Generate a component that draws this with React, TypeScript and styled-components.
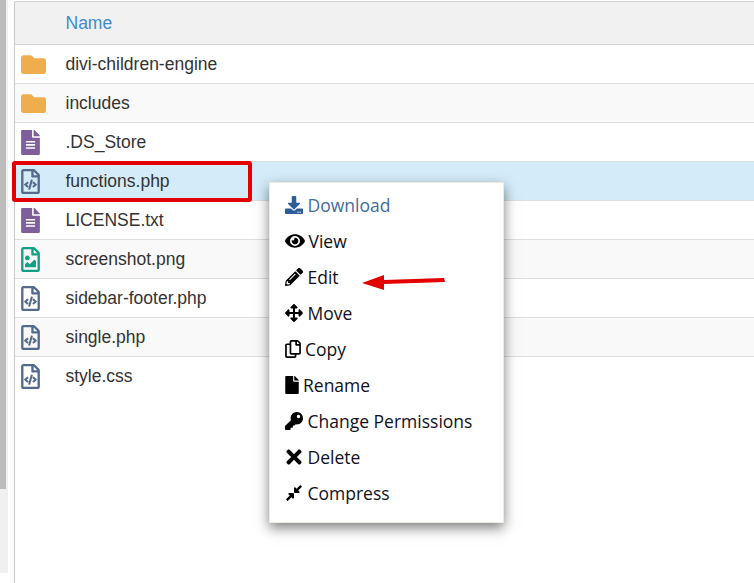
import React from "react";
import styled, { createGlobalStyle } from "styled-components";
import {
  FaFolder, FaFileAlt, FaRegFileCode, FaRegFileImage, FaDownload, FaEye, FaPencilAlt,
  FaArrowsAlt, FaRegCopy, FaFile, FaKey, FaTimes, FaCompressAlt,
} from "react-icons/fa";

const Global = createGlobalStyle`
  html, body { margin: 0; padding: 0; background: #fff; width: 754px; height: 583px; overflow: hidden; }
  #root { width: 754px; height: 583px; }
`;

const Page = styled.div`
  position: relative;
  display: flex;
  width: 754px;
  height: 583px;
  overflow: hidden;
  font-family: "Liberation Sans", Arial, sans-serif;
`;

const Track = styled.div`
  width: 8px;
  height: 573px;
  background: #f0f0f0;
  flex: none;
`;

const Thumb = styled.div`
  width: 6px;
  height: 489px;
  background: #bbbbbb;
`;

const Table = styled.div`
  margin: 1px 0 0 6px;
  flex: 1;
  height: 582px;
  border-left: 1px solid #c9c9c9;
  border-top: 1px solid #d4d4d4;
`;

const Header = styled.div`
  height: 42px;
  background: #f1f1f1;
  border-bottom: 1px solid #d4d4d4;
  display: flex;
  align-items: center;
  padding-left: 50.5px;
  font-size: 17.5px;
  color: #428bca;
`;

const Row = styled.div<{ $bg: string; $last: boolean }>`
  height: 38px;
  display: flex;
  align-items: center;
  background: ${(p) => p.$bg};
  border-bottom: ${(p) => (p.$last ? "none" : "1px solid #dddddd")};
  font-size: 17.5px;
  color: #333333;
`;

const IconCell = styled.div<{ $color: string; $w: number }>`
  width: 50.5px;
  flex: none;
  display: flex;
  justify-content: flex-start;
  padding-left: 6px;
  box-sizing: border-box;
  color: ${(p) => p.$color};
  font-size: 25px;
  svg { display: block; width: ${(p) => p.$w}px; height: 25px; }
`;

const Highlight = styled.div`
  position: absolute;
  left: 12px;
  top: 161px;
  width: 240px;
  height: 41px;
  box-sizing: border-box;
  border: 4px solid #e30000;
  border-radius: 3px;
  pointer-events: none;
`;

const Menu = styled.div`
  position: absolute;
  left: 269px;
  top: 182px;
  width: 235px;
  height: 341px;
  box-sizing: border-box;
  background: #fff;
  border: 1px solid #ececdf;
  box-shadow: 0 5px 12px rgba(0, 0, 0, 0.5);
  padding: 4px 15px 0;
  font-family: "Open Sans", sans-serif;
  font-size: 17.5px;
`;

const Item = styled.div<{ $accent?: boolean; $gap: number }>`
  height: 36px;
  display: flex;
  align-items: center;
  gap: ${(p) => p.$gap}px;
  color: ${(p) => (p.$accent ? "#3f6b9e" : "#101020")};
`;

const IconSlot = styled.span<{ $accent?: boolean; $w: number; $s: number }>`
  width: ${(p) => p.$w}px;
  flex: none;
  display: flex;
  justify-content: center;
  color: ${(p) => (p.$accent ? "#2b5f96" : "#000")};
  svg { display: block; width: ${(p) => p.$w}px; height: ${(p) => p.$s}px; }
`;

const Arrow = styled.svg`
  position: absolute;
  left: 360px;
  top: 270px;
`;

const files = [
  { n: "divi-children-engine", I: FaFolder, c: "#f0ad4e", w: 25 },
  { n: "includes", I: FaFolder, c: "#f0ad4e", w: 25 },
  { n: ".DS_Store", I: FaFileAlt, c: "#7f5f9b", w: 19 },
  { n: "functions.php", I: FaRegFileCode, c: "#546a8c", sel: true, w: 19 },
  { n: "LICENSE.txt", I: FaFileAlt, c: "#7f5f9b", w: 19 },
  { n: "screenshot.png", I: FaRegFileImage, c: "#12a085", w: 19 },
  { n: "sidebar-footer.php", I: FaRegFileCode, c: "#546a8c", w: 19 },
  { n: "single.php", I: FaRegFileCode, c: "#546a8c", w: 19 },
  { n: "style.css", I: FaRegFileCode, c: "#546a8c", w: 19 },
];

const items = [
  { t: "Download", I: FaDownload, s: 18, w: 18, gap: 4.5, accent: true },
  { t: "View", I: FaEye, s: 18, w: 20, gap: 3.5 },
  { t: "Edit", I: FaPencilAlt, s: 18, w: 18, gap: 4.5 },
  { t: "Move", I: FaArrowsAlt, s: 18, w: 18, gap: 4.5 },
  { t: "Copy", I: FaRegCopy, s: 18, w: 16, gap: 4 },
  { t: "Rename", I: FaFile, s: 18, w: 14, gap: 4 },
  { t: "Change Permissions", I: FaKey, s: 18, w: 18, gap: 4.5 },
  { t: "Delete", I: FaTimes, s: 22, w: 18, gap: 4.5 },
  { t: "Compress", I: FaCompressAlt, s: 18, w: 18, gap: 4.5 },
];

export default function App() {
  return (
    <Page>
      <Global />
      <Track><Thumb /></Track>
      <Table>
        <Header>Name</Header>
        {files.map((f, i) => (
          <Row key={f.n} $last={i === files.length - 1} $bg={f.sel ? "#d4ebf9" : i % 2 ? "#f9f9f9" : "#ffffff"}>
            <IconCell $color={f.c} $w={f.w}><f.I /></IconCell>
            {f.n}
          </Row>
        ))}
      </Table>
      <Highlight />
      <Menu>
        {items.map((m) => (
          <Item key={m.t} $accent={m.accent} $gap={m.gap}>
            <IconSlot $accent={m.accent} $w={m.w} $s={m.s}><m.I /></IconSlot>
            {m.t}
          </Item>
        ))}
      </Menu>
      <Arrow width="90" height="24" viewBox="0 0 90 24">
        <path d="M2 13 L24 5 L24 10 L84 8 L85 12 L24 14 L24 20 Z" fill="#e30000" />
      </Arrow>
    </Page>
  );
}
